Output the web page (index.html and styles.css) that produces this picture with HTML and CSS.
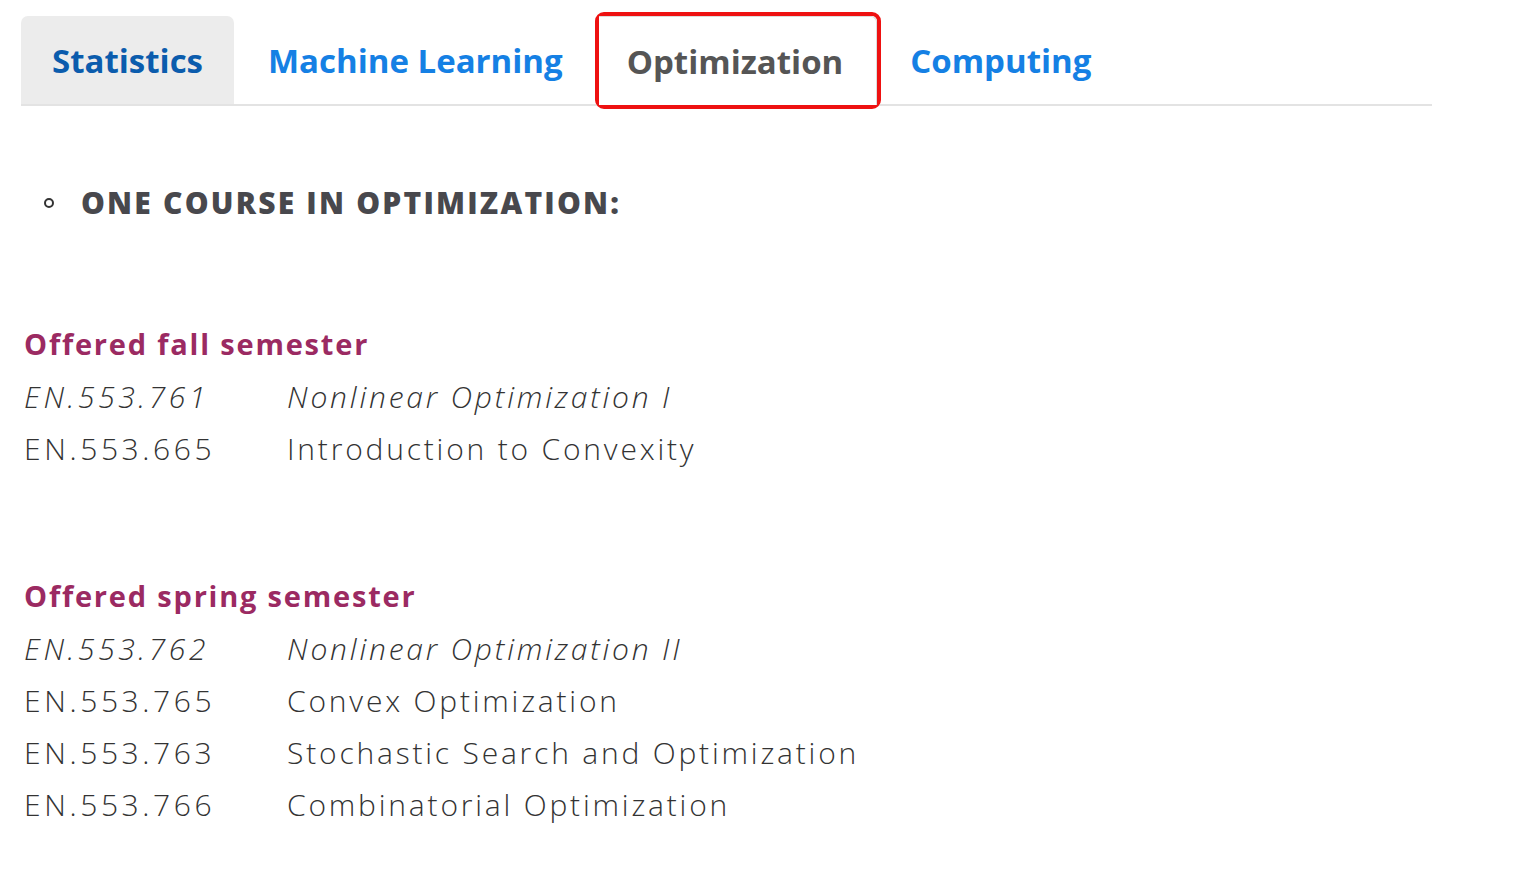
FILE: index.html
```html
<!DOCTYPE html>
<html>
<head>
<meta charset="utf-8">
<link rel="stylesheet" href="styles.css">
</head>
<body>
<div class="page">
  <nav class="tabs">
    <a class="tab tab-hover">Statistics</a>
    <a class="tab tab-ml">Machine Learning</a>
    <span class="tab-focus"><a class="tab tab-active">Optimization</a></span>
    <a class="tab tab-last">Computing</a>
  </nav>
  <ul class="reqs">
    <li>ONE COURSE IN OPTIMIZATION:</li>
  </ul>
  <section class="group">
    <h3 class="sem">Offered fall semester</h3>
    <div class="row it"><span class="code">EN.553.761</span><span class="title">Nonlinear Optimization I</span></div>
    <div class="row"><span class="code">EN.553.665</span><span class="title">Introduction to Convexity</span></div>
  </section>
  <section class="group">
    <h3 class="sem">Offered spring semester</h3>
    <div class="row it"><span class="code">EN.553.762</span><span class="title">Nonlinear Optimization II</span></div>
    <div class="row"><span class="code">EN.553.765</span><span class="title">Convex Optimization</span></div>
    <div class="row"><span class="code">EN.553.763</span><span class="title">Stochastic Search and Optimization</span></div>
    <div class="row"><span class="code">EN.553.766</span><span class="title">Combinatorial Optimization</span></div>
  </section>
</div>
</body>
</html>
```
FILE: styles.css
```css
html, body { margin: 0; padding: 0; background: #fff; }
body { font-family: "Open Sans", "Liberation Sans", sans-serif; color: #333; }
.page { padding: 16px 0 0 21px; width: 1411px; }
.tabs {
  display: flex;
  align-items: flex-end;
  border-bottom: 2px solid #e3e3e3;
  height: 88px;
}
.tab {
  display: flex;
  align-items: center;
  height: 88px;
  box-sizing: border-box;
  padding: 0 31px;
  font-size: 33px;
  font-weight: 700;
  color: #1580e4;
  text-decoration: none;
  white-space: nowrap;
}
.tab-hover {
  background: #ececec;
  color: #0b5cad;
  border-radius: 7px 7px 0 0;
}
.tab-ml { margin-left: 3px; }
.tab-focus {
  display: flex;
  margin-left: 1px;
  margin-bottom: -5px;
  border: 4px solid #ee1111;
  border-radius: 9px;
}
.tab-focus .tab {
  height: 89px;
  padding: 0 33px 0 28px;
  background: #fff;
  border: 1px solid #dcdcdc;
  border-left: none;
  border-bottom: none;
  color: #555;
  border-radius: 0 6px 0 0;
  margin: 0;
}
.tab-last { margin-left: -2px; }
.reqs {
  margin: 72px 0 0 0;
  padding: 0 0 0 23px;
  list-style: none;
  font-size: 30px;
  font-weight: 800;
  letter-spacing: 2.2px;
  color: #48484d;
}
.reqs li {
  display: flex;
  align-items: center;
  line-height: 50px;
}
.reqs li::before {
  content: "";
  width: 6px;
  height: 6px;
  border: 2px solid #333;
  border-radius: 50%;
  margin-right: 27px;
  flex: none;
}
.group { margin-top: 89px; }
.group + .group { margin-top: 94px; }
.sem {
  margin: 0;
  font-size: 29px;
  font-weight: 700;
  color: #9b2a62;
  line-height: 54px;
  letter-spacing: 1.8px;
  padding-left: 3px;
}
.row {
  display: flex;
  font-size: 30px;
  line-height: 52px;
  font-weight: 350;
  color: #333;
  padding-left: 3px;
}
.row.it { font-style: italic; }
.code { width: 263px; flex: none; letter-spacing: 3.6px; }
.title { letter-spacing: 2.8px; }
```
